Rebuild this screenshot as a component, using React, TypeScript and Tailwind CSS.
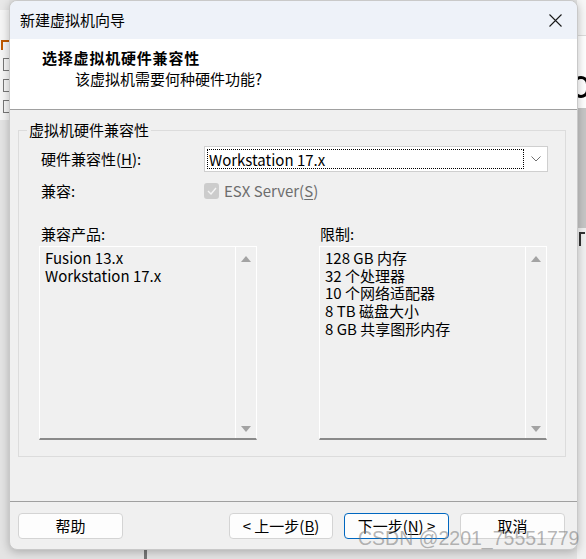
const font = "font-['Noto_Sans_CJK_SC','Noto_Sans',sans-serif]";

function U({ children }: { children: string }) {
  return <span className="underline underline-offset-2">{children}</span>;
}

function Arrow({ up }: { up?: boolean }) {
  return (
    <svg width="10" height="6" viewBox="0 0 10 6">
      <path d={up ? "M0 6 L5 0 L10 6 Z" : "M0 0 L5 6 L10 0 Z"} fill="#a3a3a3" />
    </svg>
  );
}

function ListBox({ items, width }: { items: string[]; width: string }) {
  return (
    <div className={`${width} h-[194px] flex border border-white border-b-[#8a8a8a] border-b-2 bg-[#f0f0f0]`}>
      <div className="flex-1 pl-[5px] pt-[2px] text-[15px] leading-[17.7px] text-black">
        {items.map((it) => (
          <div key={it}>{it}</div>
        ))}
      </div>
      <div className="w-[21px] border-l border-white flex flex-col items-center justify-between pt-[9px] pb-[6px]">
        <Arrow up />
        <Arrow />
      </div>
    </div>
  );
}

function Button({ children, primary, width = "w-[105px]" }: { children: React.ReactNode; primary?: boolean; width?: string }) {
  return (
    <button
      className={`h-[26px] ${width} rounded-[4px] bg-[#fdfdfd] text-[15px] text-black flex items-center justify-center ${
        primary ? "border border-[#0067c0]" : "border border-[#d4d4d4]"
      }`}
    >
      {children}
    </button>
  );
}

export default function App() {
  return (
    <div className={`relative w-[586px] h-[559px] overflow-hidden bg-[#e4e4e4] ${font}`}>
      {/* desktop behind the dialog */}
      <div className="absolute left-0 top-0 w-[9px] h-[120px] bg-[#f6f6f6]">
        <div className="h-[10px] bg-[#e8e8e8]" />
        <div className="mt-[30px] ml-[1px] w-[8px] h-[10px] border-t-2 border-l-2 border-[#c05a00]" />
        <div className="mt-[8px] ml-[3px] w-[6px] h-[13px] border border-[#777] border-r-0" />
        <div className="mt-[8px] ml-[3px] w-[6px] h-[13px] border border-[#777] border-r-0" />
        <div className="mt-[8px] ml-[3px] w-[6px] h-[13px] border border-[#777] border-r-0" />
      </div>
      <div className="absolute right-0 top-0 w-[9px] h-[559px] bg-[#f1f1f1]">
        <div className="h-[36px] bg-[#f7f7f7] border-b border-[#dcdcdc]" />
        <div className="h-[72px] bg-white relative overflow-hidden">
          <div className="absolute left-[-4px] top-[40px] w-[16px] h-[22px] rounded-full border-[3px] border-black" />
        </div>
        <div className="h-[120px] bg-[#c6c6c6]" />
        <div className="mt-[4px] ml-[2px] w-[6px] h-[14px] border-l-2 border-t-2 border-[#333]" />
      </div>
      <div className="absolute left-[144px] bottom-0 w-[3px] h-[9px] bg-[#777]" />

      <div className="relative z-10 ml-[9px] w-[569px] h-[550px] rounded-[8px] overflow-hidden border border-[#c9c9c9] shadow-[0_2px_10px_rgba(0,0,0,0.25)] bg-[#f0f0f0] flex flex-col">
        {/* title bar */}
        <div className="h-[38px] shrink-0 bg-[#eef2f9] flex items-center justify-between pl-[10px] pr-[15px]">
          <span className="text-[15px] text-black">新建虚拟机向导</span>
          <svg width="13" height="13" viewBox="0 0 13 13">
            <path d="M0.5 0.5 L12.5 12.5 M12.5 0.5 L0.5 12.5" stroke="#1a1a1a" strokeWidth="1.1" />
          </svg>
        </div>

        {/* header */}
        <div className="h-[71px] shrink-0 bg-white border-b border-[#a0a0a0] pt-[9px]">
          <div className="pl-[32px] text-[15px] leading-[20px] font-bold tracking-[0.8px] text-black">选择虚拟机硬件兼容性</div>
          <div className="pl-[65px] mt-[1px] text-[15px] leading-[20px] text-black">该虚拟机需要何种硬件功能?</div>
        </div>

        {/* body */}
        <div className="flex-1 flex flex-col">
          <div className="mt-[20px] ml-[8px] mr-[11px] h-[327px] border border-[#dcdcdc] relative">
            <div className="absolute left-[8px] top-[-11px] px-[2px] bg-[#f0f0f0] text-[15px] leading-[20px] text-black">
              虚拟机硬件兼容性
            </div>

            <div className="mt-[15px] flex items-center h-[26px] text-[15px]">
              <div className="w-[185px] pl-[22px] text-black">
                硬件兼容性(<U>H</U>):
              </div>
              <div className="w-[344px] h-[26px] bg-white border border-[#cfcfcf] flex items-center">
                <div className="ml-[2px] w-[317px] h-[20px] border border-dotted border-black flex items-center pl-[1px] text-black leading-none">
                  Workstation 17.x
                </div>
                <div className="flex-1 flex justify-center">
                  <svg width="10" height="6" viewBox="0 0 10 6">
                    <path d="M0.5 0.5 L5 5 L9.5 0.5" fill="none" stroke="#707070" strokeWidth="1" />
                  </svg>
                </div>
              </div>
            </div>

            <div className="mt-[9px] flex items-center h-[20px] text-[15px]">
              <div className="w-[185px] pl-[22px] text-black">兼容:</div>
              <div className="w-[15px] h-[16px] rounded-[3px] bg-[#cccccc] flex items-center justify-center">
                <svg width="10" height="8" viewBox="0 0 10 8">
                  <path d="M1 4 L4 7 L9 1" fill="none" stroke="#f4f4f4" strokeWidth="1.4" />
                </svg>
              </div>
              <div className="ml-[5px] text-[#6d6d6d]">
                ESX Server(<U>S</U>)
              </div>
            </div>

            <div className="mt-[22px] flex h-[20px] text-[15px] text-black pl-[20px]">
              <div className="w-[280px] pl-[2px]">兼容产品:</div>
              <div className="pl-[1px]">限制:</div>
            </div>

            <div className="mt-[3px] flex pl-[20px] gap-[62px]">
              <ListBox width="w-[218px]" items={["Fusion 13.x", "Workstation 17.x"]} />
              <ListBox
                width="w-[228px]"
                items={["128 GB 内存", "32 个处理器", "10 个网络适配器", "8 TB 磁盘大小", "8 GB 共享图形内存"]}
              />
            </div>
          </div>

          <div className="mt-[44px] h-px bg-[#a0a0a0]" />

          <div className="mt-[11px] flex pl-[8px]">
            <Button>帮助</Button>
            <div className="ml-[106px] flex gap-[11px]">
              <Button width="w-[104px]">
                &lt; 上一步(<U>B</U>)
              </Button>
              <Button primary>
                下一步(<U>N</U>) &gt;
              </Button>
              <Button>取消</Button>
            </div>
          </div>
        </div>
      </div>

      {/* watermark */}
      <div className="absolute z-20 left-[358px] top-[526px] text-[19.5px] leading-[24px] font-['Liberation_Sans',Arial,sans-serif] text-[rgba(120,120,120,0.55)] whitespace-nowrap">
        CSDN @2201_75551779
      </div>
    </div>
  );
}
